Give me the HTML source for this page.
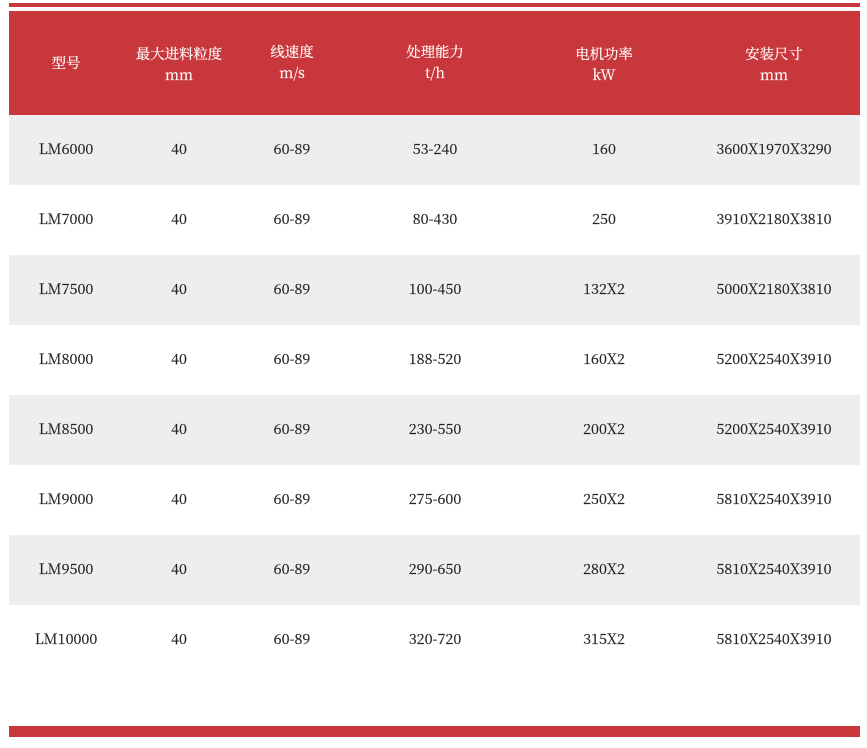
<!DOCTYPE html>
<html><head><meta charset="utf-8">
<style>
html,body{margin:0;padding:0;background:#fff;width:867px;height:748px;overflow:hidden}
body{position:relative;font-family:"Noto Serif CJK SC","Liberation Serif",serif;font-size:14.4px;color:#222;-webkit-text-stroke:.2px currentColor}
.b{position:absolute;left:9px;width:851px}
.r{position:absolute;left:9px;width:851px;height:70px}
.c{position:absolute;width:200px;text-align:center;line-height:20px;white-space:nowrap}
.h{color:#fff;line-height:21px}
</style></head><body>
<div class="b" style="top:3px;height:4px;background:#c8373b"></div>
<div class="b" style="top:11px;height:104px;background:#c8373b"></div>
<div class="b" style="top:726px;height:11px;background:#c8373b"></div>
<div class="r" style="top:115px;background:#edefee"></div>
<div class="r" style="top:255px;background:#edefee"></div>
<div class="r" style="top:395px;background:#edefee"></div>
<div class="r" style="top:535px;background:#edefee"></div>

<div class="c h" style="left:-34px;top:52px">型号</div>
<div class="c h" style="left:79px;top:43px">最大进料粒度<br>mm</div>
<div class="c h" style="left:192px;top:41px">线速度<br>m/s</div>
<div class="c h" style="left:335px;top:41px">处理能力<br>t/h</div>
<div class="c h" style="left:504px;top:43px">电机功率<br>kW</div>
<div class="c h" style="left:674px;top:43px">安装尺寸<br>mm</div>

<div class="c" style="left:-34px;top:139px">LM6000</div><div class="c" style="left:79px;top:139px">40</div><div class="c" style="left:192px;top:139px">60-89</div><div class="c" style="left:335px;top:139px">53-240</div><div class="c" style="left:504px;top:139px">160</div><div class="c" style="left:674px;top:139px">3600X1970X3290</div>
<div class="c" style="left:-34px;top:209px">LM7000</div><div class="c" style="left:79px;top:209px">40</div><div class="c" style="left:192px;top:209px">60-89</div><div class="c" style="left:335px;top:209px">80-430</div><div class="c" style="left:504px;top:209px">250</div><div class="c" style="left:674px;top:209px">3910X2180X3810</div>
<div class="c" style="left:-34px;top:279px">LM7500</div><div class="c" style="left:79px;top:279px">40</div><div class="c" style="left:192px;top:279px">60-89</div><div class="c" style="left:335px;top:279px">100-450</div><div class="c" style="left:504px;top:279px">132X2</div><div class="c" style="left:674px;top:279px">5000X2180X3810</div>
<div class="c" style="left:-34px;top:349px">LM8000</div><div class="c" style="left:79px;top:349px">40</div><div class="c" style="left:192px;top:349px">60-89</div><div class="c" style="left:335px;top:349px">188-520</div><div class="c" style="left:504px;top:349px">160X2</div><div class="c" style="left:674px;top:349px">5200X2540X3910</div>
<div class="c" style="left:-34px;top:419px">LM8500</div><div class="c" style="left:79px;top:419px">40</div><div class="c" style="left:192px;top:419px">60-89</div><div class="c" style="left:335px;top:419px">230-550</div><div class="c" style="left:504px;top:419px">200X2</div><div class="c" style="left:674px;top:419px">5200X2540X3910</div>
<div class="c" style="left:-34px;top:489px">LM9000</div><div class="c" style="left:79px;top:489px">40</div><div class="c" style="left:192px;top:489px">60-89</div><div class="c" style="left:335px;top:489px">275-600</div><div class="c" style="left:504px;top:489px">250X2</div><div class="c" style="left:674px;top:489px">5810X2540X3910</div>
<div class="c" style="left:-34px;top:559px">LM9500</div><div class="c" style="left:79px;top:559px">40</div><div class="c" style="left:192px;top:559px">60-89</div><div class="c" style="left:335px;top:559px">290-650</div><div class="c" style="left:504px;top:559px">280X2</div><div class="c" style="left:674px;top:559px">5810X2540X3910</div>
<div class="c" style="left:-34px;top:629px">LM10000</div><div class="c" style="left:79px;top:629px">40</div><div class="c" style="left:192px;top:629px">60-89</div><div class="c" style="left:335px;top:629px">320-720</div><div class="c" style="left:504px;top:629px">315X2</div><div class="c" style="left:674px;top:629px">5810X2540X3910</div>
</body></html>
